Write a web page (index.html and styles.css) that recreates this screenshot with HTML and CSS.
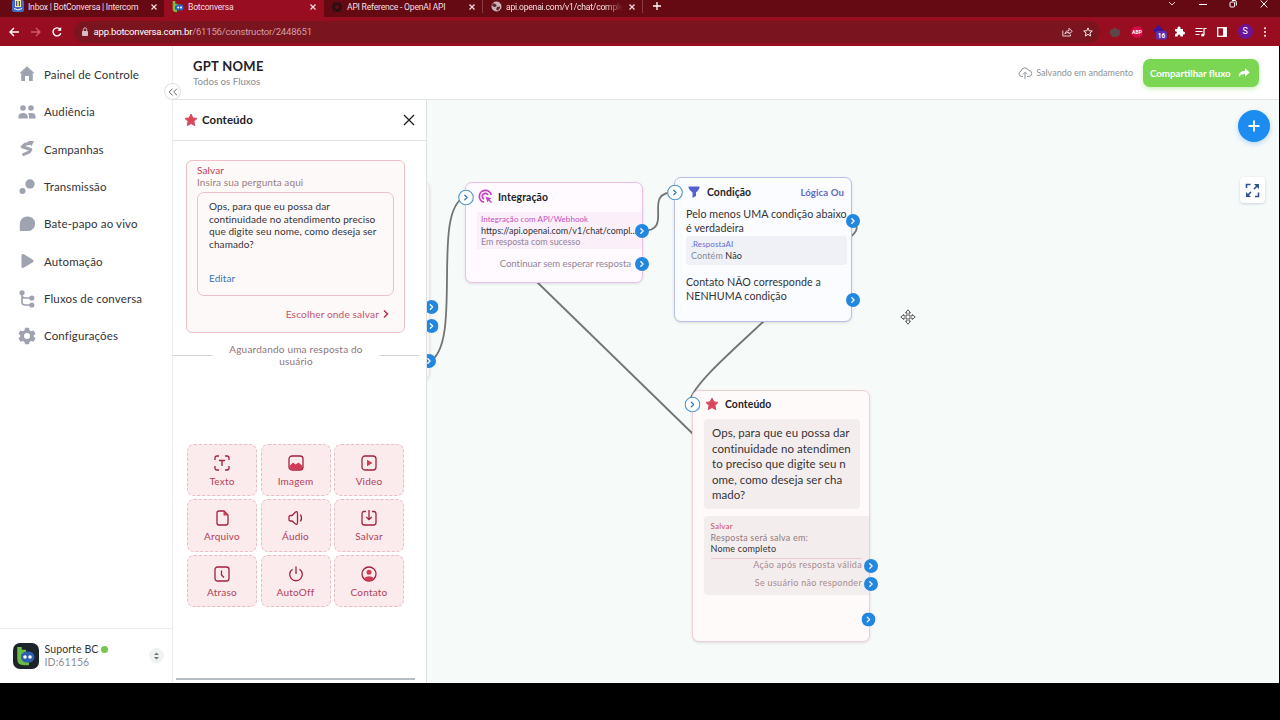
FILE: index.html
```html
<!DOCTYPE html>
<html lang="pt-BR">
<head>
  <meta charset="UTF-8">
  <meta name="viewport" content="width=device-width, initial-scale=1.0">
  <title>Botconversa</title>
  <link rel="stylesheet" href="styles.css">
</head>
<body>
  <svg class="defs" width="0" height="0">
    <symbol id="port" viewBox="0 0 14 14">
      <circle cx="7" cy="7" r="7" fill="#2387e0"/>
      <path d="M5.8 4.8 8.1 7 5.8 9.2" fill="none" stroke="#fff" stroke-width="1.3" stroke-linecap="round" stroke-linejoin="round"/>
    </symbol>
    <symbol id="port-in" viewBox="0 0 16 16">
      <circle cx="8" cy="8" r="7.3" fill="#fff" stroke="#4f97cf" stroke-width="1.1"/>
      <path d="M6.8 5.8 9.1 8 6.8 10.2" fill="none" stroke="#2d7fb9" stroke-width="1.3" stroke-linecap="round" stroke-linejoin="round"/>
    </symbol>
    <symbol id="star" viewBox="0 0 14 14">
      <path d="M7 1 8.8 4.9 13 5.4 9.9 8.3 10.7 12.6 7 10.5 3.3 12.6 4.1 8.3 1 5.4 5.2 4.9Z" fill="#d9475c" stroke="#d9475c" stroke-width="1" stroke-linejoin="round"/>
    </symbol>
    <symbol id="close" viewBox="0 0 8 8">
      <path d="M1.5 1.5 6.5 6.5M6.5 1.5 1.5 6.5" stroke="#f5dfe1" stroke-width="1.2"/>
    </symbol>
  </svg>

  <div class="browser">
    <div class="tabs">
      <div class="tab tab-first">
        <svg width="12" height="13" viewBox="0 0 12 13"><rect width="12" height="12" rx="2" fill="#4169c8"/><rect x="3" width="6" height="7" fill="#f0e9a8"/><path d="M4.7 1v5M7.3 1v5" stroke="#333" stroke-width="1"/><path d="M2 8.5Q6 11.5 10 8.5" fill="none" stroke="#fff"/></svg>
        <span class="tab-title">Inbox | BotConversa | Intercom</span>
        <svg class="x" width="8" height="8"><use href="#close"/></svg>
      </div>
      <div class="tab tab-active">
        <svg width="12" height="12" viewBox="0 0 12 12"><path d="M2 0V8Q2 10 5 10" fill="none" stroke="#79bd3d" stroke-width="2.6"/><path d="M3 4H6" stroke="#79bd3d" stroke-width="2.4"/><rect x="3.5" y="3.2" width="8" height="6.4" rx="3.2" fill="#2c66b8"/><circle cx="6.2" cy="6.4" r="1" fill="#fff"/><circle cx="9" cy="6.4" r="1" fill="#fff"/></svg>
        <span class="tab-title">Botconversa</span>
        <svg class="x" width="8" height="8"><use href="#close"/></svg>
      </div>
      <div class="tab tab-api">
        <svg width="12" height="12" viewBox="0 0 12 12" fill="none" stroke="#201014" stroke-width="1"><ellipse cx="6" cy="6" rx="5" ry="2.5"/><ellipse cx="6" cy="6" rx="5" ry="2.5" transform="rotate(60 6 6)"/><ellipse cx="6" cy="6" rx="5" ry="2.5" transform="rotate(120 6 6)"/></svg>
        <span class="tab-title">API Reference - OpenAI API</span>
        <svg class="x" width="8" height="8"><use href="#close"/></svg>
      </div>
      <div class="tab tab-last">
        <svg width="11" height="11" viewBox="0 0 11 11"><circle cx="5.5" cy="5.5" r="5" fill="#c9b3b6"/><path d="M2 2.5Q5 2 5.5 4T3 6Q1 5 1 4ZM6 6 9 5.5 9 7 7 9.5 5 8.5Z" fill="#6a242c"/></svg>
        <span class="tab-title fade">api.openai.com/v1/chat/comple</span>
        <svg class="x" width="8" height="8"><use href="#close"/></svg>
      </div>
      <svg class="new-tab" width="10" height="10" viewBox="0 0 10 10"><path d="M5 1V9M1 5H9" stroke="#fff" stroke-width="1.3"/></svg>
      <div class="win">
        <svg width="8" height="12" viewBox="0 0 8 12"><path d="M1 4 4 7 7 4" fill="none" stroke="#e8cfd1" stroke-width="1"/></svg>
        <svg width="8" height="12" viewBox="0 0 8 12"><path d="M0 6.5H8" stroke="#fff" stroke-width="1"/></svg>
        <svg width="8" height="12" viewBox="0 0 8 12" fill="none" stroke="#fff" stroke-width="1"><rect x="1" y="4" width="4.6" height="5" rx="1"/><path d="M3 2.5H6Q7.3 2.5 7.3 4V7.5"/></svg>
        <svg width="8" height="12" viewBox="0 0 8 12"><path d="M.7 2.5 7.3 9.5M7.3 2.5.7 9.5" stroke="#fff" stroke-width="1"/></svg>
      </div>
    </div>
    <div class="toolbar">
      <svg width="10" height="10" viewBox="0 0 10 10" fill="none" stroke="#fff" stroke-width="1.4"><path d="M10 5H1M5 1 1 5 5 9"/></svg>
      <svg width="10" height="10" viewBox="0 0 10 10" fill="none" stroke="#cd5e69" stroke-width="1.3"><path d="M0 5H9M5 1 9 5 5 9"/></svg>
      <svg width="10" height="10" viewBox="0 0 10 10" fill="none" stroke="#fff" stroke-width="1.4"><path d="M8.8 6.2A4 4 0 1 1 8.2 2.4"/><path d="M9.2 0V3.8H5.4Z" fill="#fff" stroke="none"/></svg>
      <div class="omnibox">
        <svg width="8" height="10" viewBox="0 0 8 10"><rect x="1" y="4" width="6" height="5" rx=".8" fill="#d5bec0"/><path d="M2.3 4V2.6a1.7 1.7 0 0 1 3.4 0V4" fill="none" stroke="#d5bec0" stroke-width="1"/></svg>
        <span class="url"><b>app.botconversa.com.br</b>/61156/constructor/2448651</span>
        <svg class="share" width="11" height="10" viewBox="0 0 11 10" fill="none" stroke="#e6cdd0" stroke-width="1"><path d="M.8 3.5V9H8.5V7.5"/><path d="M2.8 7Q3.5 3.5 7 3.5V1.2L10.2 4.4 7 7V5.3Q4.5 5.3 2.8 7Z"/></svg>
        <svg width="10" height="10" viewBox="0 0 10 10"><path d="M5 .9 6.2 3.8 9.3 4 6.9 6 7.7 9 5 7.4 2.3 9 3.1 6 .7 4 3.8 3.8Z" fill="none" stroke="#fff" stroke-width=".9"/></svg>
      </div>
      <div class="ext">
        <svg width="12" height="12" viewBox="0 0 12 12"><path d="M6 1Q7 3 10 3.5 12.5 6 10 9.5 9 11 6 11T2 9.5Q-.5 6 2 3.5 5 3 6 1Z" fill="#5d4647"/></svg>
        <svg width="12" height="12" viewBox="0 0 12 12"><path d="M3.5 .5H8.5L11.5 3.5V8.5L8.5 11.5H3.5L.5 8.5V3.5Z" fill="#d80c48"/><text x="6" y="8" text-anchor="middle" class="abp">ABP</text></svg>
        <svg width="14" height="16" viewBox="0 0 14 16"><path d="M5.5 1 11 6.5 5.5 11 0 6.5Z" fill="#3d159b"/><rect x="3" y="7" width="11" height="8.5" rx="1.5" fill="#5b30ad"/><text x="8.5" y="14" text-anchor="middle" class="badge">16</text></svg>
        <svg class="puzzle" width="11" height="11" viewBox="0 0 11 11"><path d="M1 3H3.5Q3 .5 5 .5T6.5 3H9V5.5Q11 5.2 11 7T9 8.5V10.5H6.5Q6.3 8.5 5 8.5T3.5 10.5H1V8Q3 7.8 3 6.5T1 5.2Z" fill="#fff"/></svg>
        <svg width="12" height="10" viewBox="0 0 12 10"><path d="M.5 1.5H7.5M.5 4.5H7.5M.5 7.5H4.5M9 8V1.5H11.5" fill="none" stroke="#fff" stroke-width="1.2"/><circle cx="7.7" cy="8" r="1.6" fill="#fff"/></svg>
        <svg width="10" height="10" viewBox="0 0 10 10"><rect x=".7" y=".7" width="8.6" height="8.6" fill="none" stroke="#fff" stroke-width="1.3"/><path d="M6 1H9V9H6Z" fill="#fff"/></svg>
        <span class="avatar">S</span>
        <svg width="4" height="10" viewBox="0 0 4 10" fill="#fff"><circle cx="2" cy="1.3" r="1"/><circle cx="2" cy="5" r="1"/><circle cx="2" cy="8.7" r="1"/></svg>
      </div>
    </div>
  </div>

  <div class="app">
    <aside class="sidebar">
      <nav>
        <a class="nav-item"><svg width="18" height="18" viewBox="0 0 18 18"><path d="M9 1.3 16.5 8.3H14.8V16H11V11H7V16H3.2V8.3H1.5Z"/></svg>Painel de Controle</a>
        <a class="nav-item"><svg width="18" height="18" viewBox="0 0 18 18"><circle cx="5" cy="5" r="2.8"/><circle cx="13" cy="5" r="2.8"/><path d="M.5 15.5V13.5Q.5 10 5 10T9.7 13.5V15.5ZM11 15.5V13Q11 11.5 10 10.3 17.5 9 17.5 13.5V15.5Z"/></svg>Audiência</a>
        <a class="nav-item"><svg width="18" height="18" viewBox="0 0 18 18"><path d="M12.500 3.300 7 4.300 4.200 6.800 12.800 9.500 11.500 11.800 4.500 15" fill="none" stroke="#9fa2b0" stroke-width="3" stroke-linejoin="round"/><path d="M10 1H16L13.500 6.200Z"/></svg>Campanhas</a>
        <a class="nav-item"><svg width="18" height="18" viewBox="0 0 18 18"><circle cx="12" cy="6" r="4.7"/><circle cx="4.5" cy="13" r="3"/></svg>Transmissão</a>
        <a class="nav-item"><svg width="18" height="18" viewBox="0 0 18 18"><path d="M9 1.5A7.3 7.3 0 1 1 9 16H1.8V9A7.3 7.3 0 0 1 9 1.5Z"/></svg>Bate-papo ao vivo</a>
        <a class="nav-item"><svg width="18" height="18" viewBox="0 0 18 18"><path d="M3.5 3.5Q3.5 1.5 5.5 2L14.5 7.5Q16.5 9 14.5 10.5L5.5 15.8Q3.5 16.5 3.5 14.5Z"/></svg>Automação</a>
        <a class="nav-item"><svg width="18" height="18" viewBox="0 0 18 18"><path d="M4 3V12Q4 15 7 15H13M4 6Q4.5 8 7 8H13" fill="none" stroke="#9fa2b0" stroke-width="1.6"/><circle cx="4" cy="2.8" r="2.6"/><circle cx="13.8" cy="8" r="2.6"/><circle cx="13.8" cy="15" r="2.6"/></svg>Fluxos de conversa</a>
        <a class="nav-item"><svg width="18" height="18" viewBox="0 0 18 18"><path fill-rule="evenodd" d="M7 .8H11L11.5 3.2 13.3 4.2 15.6 3.4 17.5 6.8 15.7 8.4V9.8L17.5 11.3 15.6 14.7 13.3 13.9 11.5 15 11 17.3H7L6.5 15 4.7 13.9 2.4 14.7.5 11.3 2.3 9.8V8.4L.5 6.8 2.4 3.4 4.7 4.2 6.5 3.2ZM9 6A3 3 0 1 0 9 12 3 3 0 1 0 9 6Z"/></svg>Configurações</a>
      </nav>
      <div class="account">
        <svg width="26" height="26" viewBox="0 0 26 26"><rect width="26" height="26" rx="7" fill="#1d2429"/><path d="M6.5 4V16Q6.5 20 11 20H16" fill="none" stroke="#6cbd45" stroke-width="4.5"/><path d="M7 9H13" stroke="#6cbd45" stroke-width="4.5"/><rect x="8" y="8.5" width="13.5" height="11" rx="5.5" fill="#2d5fae"/><circle cx="12" cy="14" r="1.8" fill="#fff"/><circle cx="17" cy="14" r="1.8" fill="#fff"/></svg>
        <div class="account-info">
          <div class="account-name">Suporte BC <i class="online"></i></div>
          <div class="account-id">ID:61156</div>
        </div>
        <span class="switch"><svg width="7" height="8" viewBox="0 0 7 8" fill="#70777c"><path d="M3.5 .5 6 3H1ZM3.5 7.5 1 5H6Z"/></svg></span>
      </div>
    </aside>

    <div class="main">
      <header class="header">
        <div class="titles">
          <h1>GPT NOME</h1>
          <p>Todos os Fluxos</p>
        </div>
        <div class="saving">
          <svg width="14" height="14" viewBox="0 0 14 14" fill="none" stroke="#8d9396" stroke-width="1"><path d="M5 10.5H3.5A2.7 2.7 0 0 1 3 5.2 4 4 0 0 1 10.7 4.5 3 3 0 0 1 10.7 10.5H9M7 13V6.5M5 8.3 7 6.3 9 8.3"/></svg>
          <span>Salvando em andamento</span>
        </div>
        <button class="share-btn"><span>Compartilhar fluxo</span>
          <svg width="12" height="12" viewBox="0 0 12 12"><path d="M.5 10Q.8 4 7 3.8V1.2L11.7 5.5 7 9.6V7Q3 6.8.5 10Z" fill="#fff"/></svg>
        </button>
      </header>

      <div class="work">
        <section class="panel">
          <div class="panel-head">
            <svg width="14" height="14"><use href="#star"/></svg>
            <h2>Conteúdo</h2>
            <svg class="panel-close" width="12" height="12" viewBox="0 0 12 12"><path d="M1 1 11 11M11 1 1 11" stroke="#222" stroke-width="1.4"/></svg>
          </div>
          <div class="save-card">
            <div class="save-title">Salvar</div>
            <div class="save-sub">Insira sua pergunta aqui</div>
            <div class="question">
              <p>Ops, para que eu possa dar<br>continuidade no atendimento preciso<br>que digite seu nome, como deseja ser<br>chamado?</p>
              <a class="edit">Editar</a>
            </div>
            <div class="choose"><span>Escolher onde salvar</span>
              <svg width="6" height="10" viewBox="0 0 6 10"><path d="M1 1.5 4.5 5 1 8.5" fill="none" stroke="#b52e48" stroke-width="1.5"/></svg>
            </div>
          </div>
          <div class="waiting"><hr><span>Aguardando uma resposta do<br>usuário</span><hr></div>
          <div class="blocks">
            <div class="block"><svg viewBox="0 0 16 16"><path d="M1 5V3Q1 1 3 1H5M11 1H13Q15 1 15 3V5M15 11V13Q15 15 13 15H11M5 15H3Q1 15 1 13V11M5.5 6V5.5H10.5V6M8 5.5V11"/></svg>Texto</div>
            <div class="block"><svg viewBox="0 0 16 16"><rect x="1" y="1" width="14" height="14" rx="3"/><path d="M1.5 11 5 7.5 7.5 9.5 10.5 7.5 14.5 11V13L13 14.5H3L1.5 13Z" class="fill"/></svg>Imagem</div>
            <div class="block"><svg viewBox="0 0 16 16"><rect x="1" y="1" width="14" height="14" rx="3"/><path d="M6 4.7 11.5 8 6 11.3Z" class="fill"/></svg>Video</div>
            <div class="block"><svg viewBox="0 0 16 16"><path d="M5 1H10L14 5V13Q14 15 12 15H5Q3 15 3 13V3Q3 1 5 1Z"/><path d="M9.5 1V5.5H14Z" class="fill"/></svg>Arquivo</div>
            <div class="block"><svg viewBox="0 0 16 16"><path d="M2.5 5.5H4L7.5 2Q9.5 1 9.5 3.5V12.5Q9.5 15 7.5 14L4 11H2.5Q1 11 1 9.5V7Q1 5.5 2.5 5.5ZM12.5 4.5Q14.5 8 12.5 11.5"/></svg>Áudio</div>
            <div class="block"><svg viewBox="0 0 16 16"><path d="M5 1.5H3Q1 1.5 1 4V12.5Q1 15 3.5 15H12.5Q15 15 15 12.5V4Q15 1.5 13 1.5H11M8 0V9.5M5.3 7 8 9.7 10.7 7"/></svg>Salvar</div>
            <div class="block"><svg viewBox="0 0 16 16"><rect x="1" y="1" width="14" height="14" rx="2.5"/><path d="M7.5 4.5V9L10 11.5"/></svg>Atraso</div>
            <div class="block"><svg viewBox="0 0 16 16"><path d="M8 .5V8M4.5 3.2A6.3 6.3 0 1 0 11.5 3.2"/></svg>AutoOff</div>
            <div class="block"><svg viewBox="0 0 16 16"><circle cx="8" cy="8" r="7"/><circle cx="8" cy="6.2" r="2.5" class="fill"/><path d="M3 12Q8 8.5 13 12 11 15 8 15T3 12Z" class="fill"/></svg>Contato</div>
          </div>
          <div class="scrollbar"></div>
        </section>

        <div class="canvas">
          <div class="node node-prev"></div>
          <svg class="edges" width="851" height="583" viewBox="427 100 851 583">
            <path d="M429 362C464 345 430 210 465 197"/>
            <path d="M642 231C676 231 640 192 675 192"/>
            <path d="M537 282 693 434"/>
            <path d="M853 221C862 229 852 235 849 239L764 321C730 353 696 382 690 400"/>
          </svg>

          <div class="node node-api">
            <div class="node-head">
              <svg width="15" height="15" viewBox="0 0 15 15" fill="none" stroke="#c63fc0" stroke-width="1.7"><path d="M13.2 6A6 6 0 1 0 6 13.2"/><path d="M10 6A3 3 0 1 0 6 10"/><path d="M7.5 7.5 13.5 9.5 11.5 10.6 14 13.2 13 14 10.5 11.6 9.5 13.5Z" fill="#c63fc0" stroke="none"/></svg>
              <h3>Integração</h3>
            </div>
            <div class="api-box">
              <div class="api-label">Integração com API/Webhook</div>
              <div class="api-url">https://api.openai.com/v1/chat/compl...</div>
              <div class="api-status">Em resposta com sucesso</div>
            </div>
            <div class="api-next">Continuar sem esperar resposta</div>
          </div>

          <div class="node node-cond">
            <div class="node-head">
              <svg width="14" height="14" viewBox="0 0 14 14"><path d="M1.5 1.5H12.5Q13 4 9 7.5V11L5.5 13V7.5Q1 4 1.5 1.5Z" fill="#5560d2"/></svg>
              <h3>Condição</h3>
              <span class="logic">Lógica Ou</span>
            </div>
            <p class="cond-text">Pelo menos UMA condição abaixo<br>é verdadeira</p>
            <div class="cond-box">
              <div class="cond-var">.RespostaAI</div>
              <div class="cond-rule">Contém <b>Não</b></div>
            </div>
            <p class="cond-text">Contato NÃO corresponde a<br>NENHUMA condição</p>
          </div>

          <div class="node node-content">
            <div class="node-head">
              <svg width="14" height="14"><use href="#star"/></svg>
              <h3>Conteúdo</h3>
            </div>
            <div class="message">Ops, para que eu possa dar<br>continuidade no atendimen<br>to preciso que digite seu n<br>ome, como deseja ser cha<br>mado?</div>
            <div class="save-box">
              <div class="save-label">Salvar</div>
              <div class="save-to">Resposta será salva em:</div>
              <div class="save-field">Nome completo</div>
              <div class="save-out">Ação após resposta válida</div>
              <div class="save-out">Se usuário não responder</div>
            </div>
          </div>

          <svg class="ports" width="851" height="583" viewBox="427 100 851 583">
            <use href="#port" x="424.5" y="300" width="14" height="14"/>
            <use href="#port" x="424.5" y="319" width="14" height="14"/>
            <use href="#port" x="422" y="354" width="14" height="14"/>
            <use href="#port-in" x="458" y="189.5" width="16" height="16"/>
            <use href="#port" x="635" y="224" width="14" height="14"/>
            <use href="#port" x="635" y="257" width="14" height="14"/>
            <use href="#port-in" x="667" y="184.5" width="16" height="16"/>
            <use href="#port" x="846" y="214" width="14" height="14"/>
            <use href="#port" x="846" y="293" width="14" height="14"/>
            <use href="#port-in" x="684.5" y="396.5" width="16" height="16"/>
            <use href="#port" x="864" y="559" width="14" height="14"/>
            <use href="#port" x="864" y="577" width="14" height="14"/>
            <use href="#port" x="861.5" y="612.5" width="14" height="14"/>
          </svg>

          <button class="add"><svg width="12" height="12" viewBox="0 0 12 12"><path d="M6 .5V11.5M.5 6H11.5" stroke="#fff" stroke-width="1.8"/></svg></button>
          <button class="expand"><svg width="15" height="15" viewBox="0 0 15 15" fill="none" stroke="#2d5296" stroke-width="1.6"><path d="M1.5 5V1.5H5.5M10 13.5H13.5V9.5M12.5 2.5 9 6M2.5 12.5 6 9"/><path d="M9 1H14V6ZM1 9V14H6Z" fill="#2d5296" stroke="none"/></svg></button>
          <svg class="cursor" width="16" height="16" viewBox="0 0 16 16" fill="#fff" stroke="#444" stroke-width=".9"><path d="M8 .8 10.5 3.8H9V7H12.2V5.5L15.2 8 12.2 10.5V9H9V12.2H10.5L8 15.2 5.5 12.2H7V9H3.8V10.5L.8 8 3.8 5.5V7H7V3.8H5.5Z"/></svg>
        </div>
      </div>
    </div>
    <button class="collapse"><svg width="10" height="8" viewBox="0 0 10 8" fill="none" stroke="#666" stroke-width="1"><path d="M4.5 .7 1.2 4 4.5 7.3M9 .7 5.7 4 9 7.3"/></svg></button>
  </div>
</body>
</html>
```
FILE: styles.css
```css
* {
  box-sizing: border-box;
}

body {
  margin: 0;
  width: 1280px;
  height: 720px;
  overflow: hidden;
  background: #000;
  font-family: Lato, "Open Sans", sans-serif;
  font-size: 11px;
  letter-spacing: 0.1px;
  color: #333338;
}

h1, h2, h3, p {
  margin: 0;
}

h1, h2, h3 {
  color: #222226;
}

svg {
  flex-shrink: 0;
}

button {
  border: 0;
  padding: 0;
  font-family: inherit;
}

.defs {
  position: absolute;
}

/* browser */
.browser {
  height: 46px;
  font-family: Roboto, "Open Sans", sans-serif;
  letter-spacing: 0;
}

.tabs {
  display: flex;
  height: 17px;
  background: #650a13;
  color: #f5dfe1;
  font-size: 8.6px;
  letter-spacing: -0.22px;
}

.tab {
  display: flex;
  align-items: center;
  height: 13px;
}

.tab-title {
  margin-left: 4px;
  white-space: nowrap;
}

.tab .x {
  margin-left: auto;
}

.tab-first {
  width: 164px;
  padding: 0 6px 0 12px;
}

.tab-active {
  width: 160px;
  height: 17px;
  padding: 0 7px 4px 8px;
  background: #990d20;
}

.tab-api {
  width: 159px;
  padding: 0 6px 0 7px;
  border-right: 1px solid #8c3a42;
}

.tab-last {
  width: 160px;
  padding: 0 6px 0 8px;
  border-right: 1px solid #8c3a42;
}

.fade {
  -webkit-mask-image: linear-gradient(90deg, #000 85%, transparent);
  mask-image: linear-gradient(90deg, #000 85%, transparent);
}

.new-tab {
  margin: 1px 0 0 9px;
}

.win {
  display: flex;
  gap: 22.7px;
  margin: -2px 12px 0 auto;
}

.toolbar {
  display: flex;
  align-items: center;
  gap: 11.5px;
  height: 29px;
  padding: 0 13px 0 9px;
  background: #990d20;
}

.omnibox {
  display: flex;
  align-items: center;
  gap: 10px;
  width: 1026.5px;
  height: 22px;
  padding: 0 7px;
  border-radius: 11px;
  background: #7a141f;
}

.url {
  margin-left: -5px;
  font-size: 9.6px;
  letter-spacing: -0.24px;
  color: #d59da2;
}

.url b {
  font-weight: 400;
  color: #fff;
}

.share {
  margin-left: auto;
}

.ext {
  display: flex;
  flex: 1;
  align-items: center;
  justify-content: space-between;
  margin-left: -3px;
}

.puzzle {
  margin-left: -4px;
}

.abp {
  fill: #fff;
  font-size: 5px;
  font-weight: 700;
}

.badge {
  fill: #fff;
  font-size: 6.5px;
  font-weight: 700;
}

.avatar {
  width: 15px;
  height: 15px;
  border-radius: 50%;
  background: #6b1497;
  color: #fff;
  font-size: 9px;
  line-height: 15px;
  text-align: center;
}

/* app */
.app {
  position: relative;
  display: flex;
  width: 1279px;
  height: 637px;
  background: #fff;
}

.sidebar {
  display: flex;
  flex-direction: column;
  width: 173px;
  border-right: 1px solid #ececef;
}

.sidebar nav {
  flex: 1;
  padding-top: 9.8px;
}

.nav-item {
  display: flex;
  align-items: center;
  gap: 8.5px;
  height: 37.35px;
  padding-left: 17.5px;
  font-size: 11.5px;
  letter-spacing: 0.13px;
}

.nav-item svg {
  fill: #9fa2b0;
}

.account {
  display: flex;
  align-items: center;
  height: 55px;
  padding: 0 8px 1px 13px;
  border-top: 1px solid #ececef;
}

.account-info {
  margin-left: 5.5px;
  font-size: 10.5px;
  line-height: 13px;
}

.account-name {
  display: flex;
  align-items: center;
  gap: 3px;
}

.online {
  width: 7px;
  height: 7px;
  border-radius: 50%;
  background: #77c74f;
}

.account-id {
  color: #8f8f9b;
}

.switch {
  display: flex;
  align-items: center;
  justify-content: center;
  width: 15px;
  height: 15px;
  margin-left: auto;
  border-radius: 50%;
  background: #eff2f1;
}

.collapse {
  position: absolute;
  left: 164px;
  top: 37px;
  display: flex;
  align-items: center;
  justify-content: center;
  width: 17px;
  height: 17px;
  border: 1px solid #dcdde0;
  border-radius: 50%;
  background: #fff;
}

.main {
  display: flex;
  flex: 1;
  flex-direction: column;
}

.header {
  display: flex;
  align-items: center;
  height: 54px;
  padding: 0 20px 0 20px;
  border-bottom: 1px solid #dfe3e3;
}

.titles {
  margin-right: auto;
  padding-top: 2px;
}

.titles h1 {
  font-size: 13px;
  line-height: 16px;
  letter-spacing: 0.3px;
}

.titles p {
  font-size: 9.7px;
  line-height: 15px;
  letter-spacing: 0;
  color: #8b8b93;
}

.saving {
  display: flex;
  align-items: center;
  gap: 4px;
  margin-right: 10px;
  font-size: 9px;
  letter-spacing: 0;
  color: #8d9396;
}

.share-btn {
  display: flex;
  align-items: center;
  justify-content: space-between;
  width: 116px;
  height: 28px;
  padding: 0 9px 0 7px;
  border-radius: 7px;
  background: #7ad653;
  box-shadow: 0 2px 5px rgba(122, 214, 83, 0.4);
  color: #fff;
  font-size: 9.7px;
  font-weight: 700;
  letter-spacing: 0;
}

.work {
  display: flex;
  flex: 1;
}

/* content panel */
.panel {
  display: flex;
  flex-direction: column;
  width: 254px;
  border-right: 1px solid #dde2e2;
}

.panel-head {
  display: flex;
  align-items: center;
  height: 41px;
  padding: 0 11px 1px 10.5px;
  border-bottom: 1px solid #dfe2e2;
}

.panel-head h2 {
  margin-left: 4.5px;
  font-size: 11.4px;
}

.panel-close {
  margin-left: auto;
}

.save-card {
  width: 219px;
  height: 173px;
  margin: 19px 0 0 13px;
  padding: 3px 10px;
  border: 1px solid #edc1c7;
  border-radius: 6px;
  background: #fdf9f8;
}

.save-title {
  font-size: 10px;
  line-height: 12px;
  color: #c43d59;
}

.save-sub {
  font-size: 10px;
  line-height: 13px;
  color: #9b7d82;
}

.question {
  height: 104px;
  margin-top: 3px;
  padding: 7px 11px;
  border: 1px solid #edc1c7;
  border-radius: 7px;
  font-size: 10px;
  line-height: 12.6px;
}

.edit {
  display: block;
  margin-top: 22px;
  color: #3a74bd;
}

.choose {
  display: flex;
  align-items: center;
  justify-content: flex-end;
  gap: 4px;
  height: 36px;
  padding-right: 5px;
  font-size: 10.2px;
  color: #c4566b;
}

.waiting {
  display: flex;
  align-items: flex-start;
  justify-content: space-between;
  margin-top: 10px;
  padding-right: 7px;
  font-size: 10px;
  line-height: 12px;
  letter-spacing: 0.2px;
  text-align: center;
  color: #8f7478;
}

.waiting hr {
  width: 40px;
  margin: 12px 0 0;
  border: 0;
  border-top: 1px solid #d8d5d8;
}

.blocks {
  display: grid;
  grid-template-columns: repeat(3, 70px);
  gap: 3px 3.5px;
  margin: 77px 0 0 14px;
}

.block {
  display: flex;
  flex-direction: column;
  align-items: center;
  gap: 4px;
  height: 52.3px;
  padding-top: 10px;
  border: 1px dashed #e8bcc3;
  border-radius: 7px;
  background: #fbebec;
  font-size: 10px;
  line-height: 13px;
  letter-spacing: 0.2px;
  color: #b44158;
}

.block svg {
  width: 16px;
  height: 16px;
  fill: none;
  stroke: #a3213d;
  stroke-width: 1.3;
}

.block .fill {
  fill: #d03c55;
  stroke: none;
}

.scrollbar {
  width: 239px;
  height: 2px;
  margin: auto 0 3px 3px;
  background: #b5bcc3;
}

/* flow canvas */
.canvas {
  position: relative;
  flex: 1;
  overflow: hidden;
  background: #f6faf9;
}

.edges,
.ports {
  position: absolute;
  left: 0;
  top: 0;
}

.edges path {
  fill: none;
  stroke: #747474;
  stroke-width: 1.8;
}

.node {
  position: absolute;
  width: 178px;
  border: 1px solid;
  border-radius: 7px;
  box-shadow: 0 1px 3px rgba(60, 60, 90, 0.15);
}

.node-head {
  display: flex;
  align-items: center;
  height: 28px;
}

.node-head h3 {
  font-size: 10.4px;
}

.node-prev {
  left: -175px;
  top: 81px;
  height: 199px;
  border-color: #f5dde2;
  background: #fdf5f6;
}

.node-api {
  left: 38px;
  top: 82px;
  height: 101px;
  border-color: #ecc1e6;
  background: #fefaff;
}

.node-api .node-head {
  gap: 5px;
  padding: 0 0 1px 12px;
}

.api-box {
  height: 37px;
  margin: 1px 0 0 11px;
  padding: 2px 4px;
  background: #fbeff9;
  font-size: 9px;
  line-height: 11px;
  white-space: nowrap;
}

.api-label {
  font-size: 8px;
  letter-spacing: 0.05px;
  color: #c64fbc;
}

.api-url {
  letter-spacing: 0;
}

.api-status,
.api-next {
  letter-spacing: -0.05px;
  color: #95859a;
}

.api-next {
  padding: 8px 11px 0 0;
  font-size: 9.6px;
  line-height: 14px;
  text-align: right;
}

.node-cond {
  left: 247px;
  top: 77px;
  height: 145px;
  border-color: #b9bfe6;
  background: #fafcff;
}

.node-cond .node-head {
  padding: 0 7px 0 12px;
}

.node-cond h3 {
  margin-left: 6px;
}

.logic {
  margin-left: auto;
  font-size: 9.6px;
  font-weight: 700;
  color: #6269c4;
}

.cond-text {
  padding: 1px 0 0 11px;
  font-size: 10.7px;
  line-height: 14px;
  letter-spacing: 0.04px;
  white-space: nowrap;
}

.cond-box {
  width: 161px;
  height: 29px;
  margin: 1px 0 9px 11px;
  padding: 3px 5px;
  border-radius: 3px;
  background: #eff1f6;
}

.cond-var {
  font-size: 8px;
  line-height: 11px;
  color: #666fd0;
}

.cond-rule {
  font-size: 9px;
  line-height: 11px;
  color: #85899b;
}

.cond-rule b {
  font-weight: 400;
  color: #2b2b2f;
}

.node-content {
  left: 265px;
  top: 290px;
  height: 252px;
  border-color: #f0cfd3;
  background: #fdfaf9;
}

.node-content .node-head {
  gap: 6px;
  padding: 0 0 2px 12px;
}

.message {
  width: 156px;
  height: 90px;
  margin: 0 0 7px 10.5px;
  padding: 6px 8.5px;
  border-radius: 4px;
  background: #f3eeed;
  font-size: 11.5px;
  line-height: 15.6px;
  letter-spacing: 0.05px;
  white-space: nowrap;
}

.save-box {
  height: 79px;
  margin-left: 10.5px;
  padding: 5px 7px 0;
  border-radius: 4px 0 0 4px;
  background: #f3eeed;
  font-size: 9px;
  line-height: 11px;
  letter-spacing: 0.2px;
}

.save-label {
  font-size: 8px;
  color: #cf4961;
}

.save-to {
  color: #95797d;
}

.save-field {
  padding-bottom: 4px;
  margin-bottom: -1px;
  height: 16px;
  border-bottom: 1px solid #ecc9cd;
}

.save-out {
  height: 18px;
  line-height: 14px;
  letter-spacing: 0.3px;
  text-align: right;
  color: #a98a90;
}

.add {
  position: absolute;
  left: 811px;
  top: 10px;
  display: flex;
  align-items: center;
  justify-content: center;
  width: 32px;
  height: 32px;
  border-radius: 50%;
  background: #1d8cf0;
  box-shadow: 0 2px 5px rgba(29, 140, 240, 0.3);
}

.expand {
  position: absolute;
  left: 813px;
  top: 77px;
  display: flex;
  align-items: center;
  justify-content: center;
  width: 25px;
  height: 26px;
  border-radius: 4px;
  background: #fff;
  box-shadow: 0 1px 3px rgba(40, 60, 120, 0.2);
}

.cursor {
  position: absolute;
  left: 473px;
  top: 209px;
}
```
